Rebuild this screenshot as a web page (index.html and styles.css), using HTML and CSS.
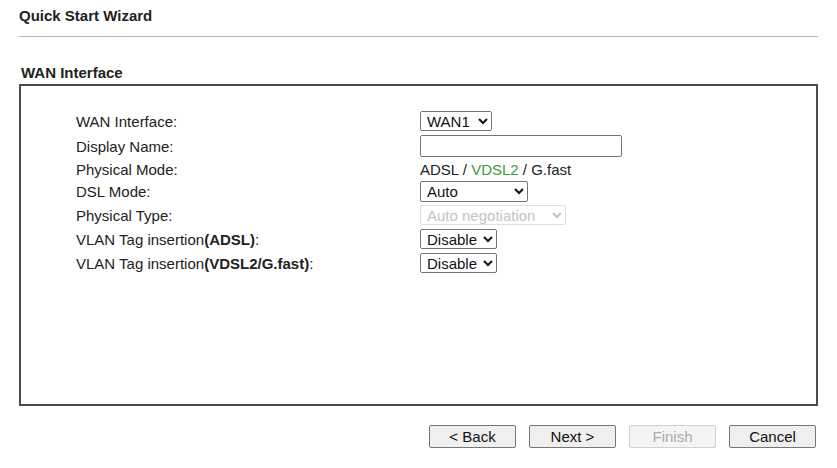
FILE: index.html
```html
<!DOCTYPE html>
<html lang="en">
<head>
    <meta charset="UTF-8">
    <title>Quick Start Wizard</title>
    <link rel="stylesheet" href="styles.css">
</head>
<body>
<div class="page">

    <!-- Title -->
    <div class="title">Quick Start Wizard</div>
    <hr class="rule">

    <!-- WAN Interface -->
    <div class="section-title">WAN Interface</div>
    <div class="box">
        <div class="form">
            <div class="label">WAN Interface:</div>
            <div class="value">
                <select class="sel sel-wan">
                    <option>WAN1</option>
                </select>
            </div>

            <div class="label">Display Name:</div>
            <div class="value"><input type="text" class="text-input"></div>

            <div class="label">Physical Mode:</div>
            <div class="value text-row">ADSL / <span class="green">VDSL2</span> / G.fast</div>

            <div class="label">DSL Mode:</div>
            <div class="value">
                <select class="sel sel-auto">
                    <option>Auto</option>
                </select>
            </div>

            <div class="label">Physical Type:</div>
            <div class="value">
                <select class="sel sel-neg" disabled>
                    <option>Auto negotiation</option>
                </select>
            </div>

            <div class="label">VLAN Tag insertion<b>(ADSL)</b>:</div>
            <div class="value">
                <select class="sel sel-dis">
                    <option>Disable</option>
                </select>
            </div>

            <div class="label">VLAN Tag insertion<b>(VDSL2/G.fast)</b>:</div>
            <div class="value">
                <select class="sel sel-dis">
                    <option>Disable</option>
                </select>
            </div>
        </div>
    </div>

    <!-- Buttons -->
    <div class="buttons">
        <button class="btn">&lt; Back</button>
        <button class="btn">Next &gt;</button>
        <button class="btn" disabled>Finish</button>
        <button class="btn">Cancel</button>
    </div>

</div>
</body>
</html>
```

FILE: styles.css
```css
body {
    margin: 0;
    font-family: "Liberation Sans", Arial, sans-serif;
    color: #222;
    background: #fff;
}

.page {
    padding: 0 19px;
}

/* Title */
.title {
    font-size: 15px;
    font-weight: bold;
    line-height: 17px;
    padding-top: 7px;
}

.rule {
    border: none;
    border-top: 1px solid #b4b4b4;
    margin: 12px 0 0;
}

.section-title {
    font-size: 15px;
    font-weight: bold;
    line-height: 17px;
    margin-top: 27px;
    padding-left: 2px;
    height: 20px;
}

/* Box */
.box {
    border: 2px solid #4d4d4d;
    height: 322px;
    padding-top: 23px;
    box-sizing: border-box;
}

.form {
    display: grid;
    grid-template-columns: 344px auto;
    grid-template-rows: 24px 26px 20px 24px 24px 24px 24px;
    padding-left: 55px;
    font-size: 15px;
}

.label,
.value {
    display: flex;
    align-items: center;
}

.green {
    color: #3a9a3a;
}

.text-row {
    white-space: pre;
}

/* Controls */
.sel {
    font-family: "Liberation Sans", Arial, sans-serif;
    font-size: 15px;
    color: #111;
    background: #fff;
    border: 1px solid #767676;
    border-radius: 2px;
    height: 20px;
    padding: 0 0 0 2px;
    margin: 0;
}

.sel-wan {
    width: 72px;
}

.sel-auto {
    width: 108px;
    height: 21px;
}

.sel-neg {
    width: 146px;
    color: #aaa;
    border-color: #d4d4d4;
}

.sel-dis {
    width: 77px;
}

.text-input {
    width: 202px;
    height: 22px;
    box-sizing: border-box;
    border: 1px solid #767676;
    border-radius: 2px;
    margin: 0;
    font-size: 15px;
}

/* Buttons */
.buttons {
    display: flex;
    justify-content: flex-end;
    gap: 13px;
    margin-top: 19px;
    padding-right: 2px;
}

.btn {
    width: 87px;
    height: 23px;
    font-family: "Liberation Sans", Arial, sans-serif;
    font-size: 15px;
    color: #111;
    background: #efefef;
    border: 1px solid #767676;
    border-radius: 2px;
    padding: 0;
}

.btn:disabled {
    color: #aaa;
    background: #f4f4f4;
    border-color: #d0d0d0;
}
```
